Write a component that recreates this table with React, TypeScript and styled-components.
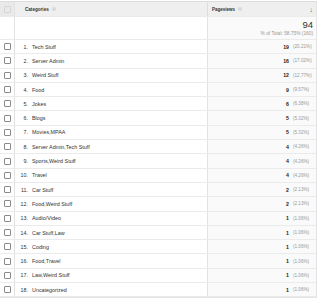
import styled, { createGlobalStyle } from 'styled-components';

const GlobalStyle = createGlobalStyle`
    body {
        margin: 0;
        background: #fff;
        font-family: 'Liberation Sans', Arial, sans-serif;
        color: #222;
    }
`;

const rows: [string, number, string][] = [
    ['Tech Stuff', 19, '20.21%'],
    ['Server Admin', 16, '17.02%'],
    ['Weird Stuff', 12, '12.77%'],
    ['Food', 9, '9.57%'],
    ['Jokes', 6, '6.38%'],
    ['Blogs', 5, '5.32%'],
    ['Movies,MPAA', 5, '5.32%'],
    ['Server Admin,Tech Stuff', 4, '4.26%'],
    ['Sports,Weird Stuff', 4, '4.26%'],
    ['Travel', 4, '4.26%'],
    ['Car Stuff', 2, '2.13%'],
    ['Food,Weird Stuff', 2, '2.13%'],
    ['Audio/Video', 1, '1.06%'],
    ['Car Stuff,Law', 1, '1.06%'],
    ['Coding', 1, '1.06%'],
    ['Food,Travel', 1, '1.06%'],
    ['Law,Weird Stuff', 1, '1.06%'],
    ['Uncategorized', 1, '1.06%'],
];

const Table = styled.div`
    width: 316px;
    margin-top: 1px;
    border-top: 1px solid #dcdcdc;
    border-bottom: 1px solid #e4e4e4;
    border-right: 1px solid #e4e4e4;
`;

const Row = styled.div<{ $height: number; $head?: boolean }>`
    display: grid;
    grid-template-columns: 15px 13px 179px 1fr;
    height: ${({ $height }) => $height}px;
    background: ${({ $head }) => ($head ? '#efefef' : '#fff')};
    border-bottom: 1px solid #ebebeb;
    box-sizing: border-box;
`;

const CheckCell = styled.div<{ $head?: boolean }>`
    display: flex;
    align-items: center;
    justify-content: center;
    border-right: 1px solid #e2e2e2;
    background: ${({ $head }) => ($head ? '#e9e9e9' : 'transparent')};
`;

const Box = styled.span<{ $faint?: boolean }>`
    width: 5px;
    height: 5px;
    border: 1px solid ${({ $faint }) => ($faint ? '#d6d6d6' : '#8a8a8a')};
    border-radius: 1px;
`;

const Num = styled.div`
    font-size: 5.3px;
    text-align: right;
    align-self: center;
    color: #333;
`;

const Name = styled.div`
    font-size: 5.4px;
    align-self: center;
    padding-left: 4px;
    color: #333;
    white-space: nowrap;
`;

const HeadLabel = styled.div`
    grid-column: 2 / 4;
    display: flex;
    align-items: center;
    gap: 3px;
    padding-left: 10px;
    font-size: 4.6px;
    font-weight: bold;
    color: #333;
`;

const Help = styled.span`
    width: 4px;
    height: 4px;
    border-radius: 50%;
    background: #d8d8d8;
`;

const ValueHead = styled.div`
    display: flex;
    align-items: center;
    gap: 3px;
    padding-left: 4px;
    padding-right: 3px;
    border-left: 1px solid #dedede;
    font-size: 4.5px;
    font-weight: bold;
    color: #333;
`;

const Arrow = styled.span`
    margin-left: auto;
    font-size: 7px;
    font-weight: normal;
    color: #666;
`;

const SummaryLeft = styled.div`
    grid-column: 2 / 4;
`;

const SummaryValue = styled.div`
    display: flex;
    flex-direction: column;
    align-items: flex-end;
    justify-content: center;
    padding-right: 3px;
    border-left: 1px solid #e2e2e2;
    background: #fafafa;
`;

const Big = styled.div`
    font-size: 9.5px;
    color: #333;
    line-height: 10px;
`;

const Small = styled.div`
    font-size: 4.8px;
    color: #999;
    margin-top: 1px;
`;

const Value = styled.div`
    display: flex;
    align-items: center;
    justify-content: flex-end;
    gap: 4px;
    padding-right: 3px;
    border-left: 1px solid #e2e2e2;
    background: #fafafa;
`;

const Count = styled.span`
    font-size: 5.2px;
    font-weight: bold;
    color: #222;
`;

const Pct = styled.span`
    font-size: 4.6px;
    color: #999;
    width: 20px;
`;

const App = () => (
    <>
        <GlobalStyle />
        <Table>
            <Row $height={15} $head>
                <CheckCell $head>
                    <Box $faint />
                </CheckCell>
                <HeadLabel>
                    Categories <Help />
                </HeadLabel>
                <ValueHead>
                    Pageviews <Help />
                    <Arrow>↓</Arrow>
                </ValueHead>
            </Row>
            <Row $height={23}>
                <CheckCell />
                <SummaryLeft />
                <SummaryValue>
                    <Big>94</Big>
                    <Small>% of Total: 58.75% (160)</Small>
                </SummaryValue>
            </Row>
            {rows.map(([name, count, pct], i) => (
                <Row key={name} $height={14.3}>
                    <CheckCell>
                        <Box />
                    </CheckCell>
                    <Num>{i + 1}.</Num>
                    <Name>{name}</Name>
                    <Value>
                        <Count>{count}</Count>
                        <Pct>({pct})</Pct>
                    </Value>
                </Row>
            ))}
        </Table>
    </>
);

export default App;
